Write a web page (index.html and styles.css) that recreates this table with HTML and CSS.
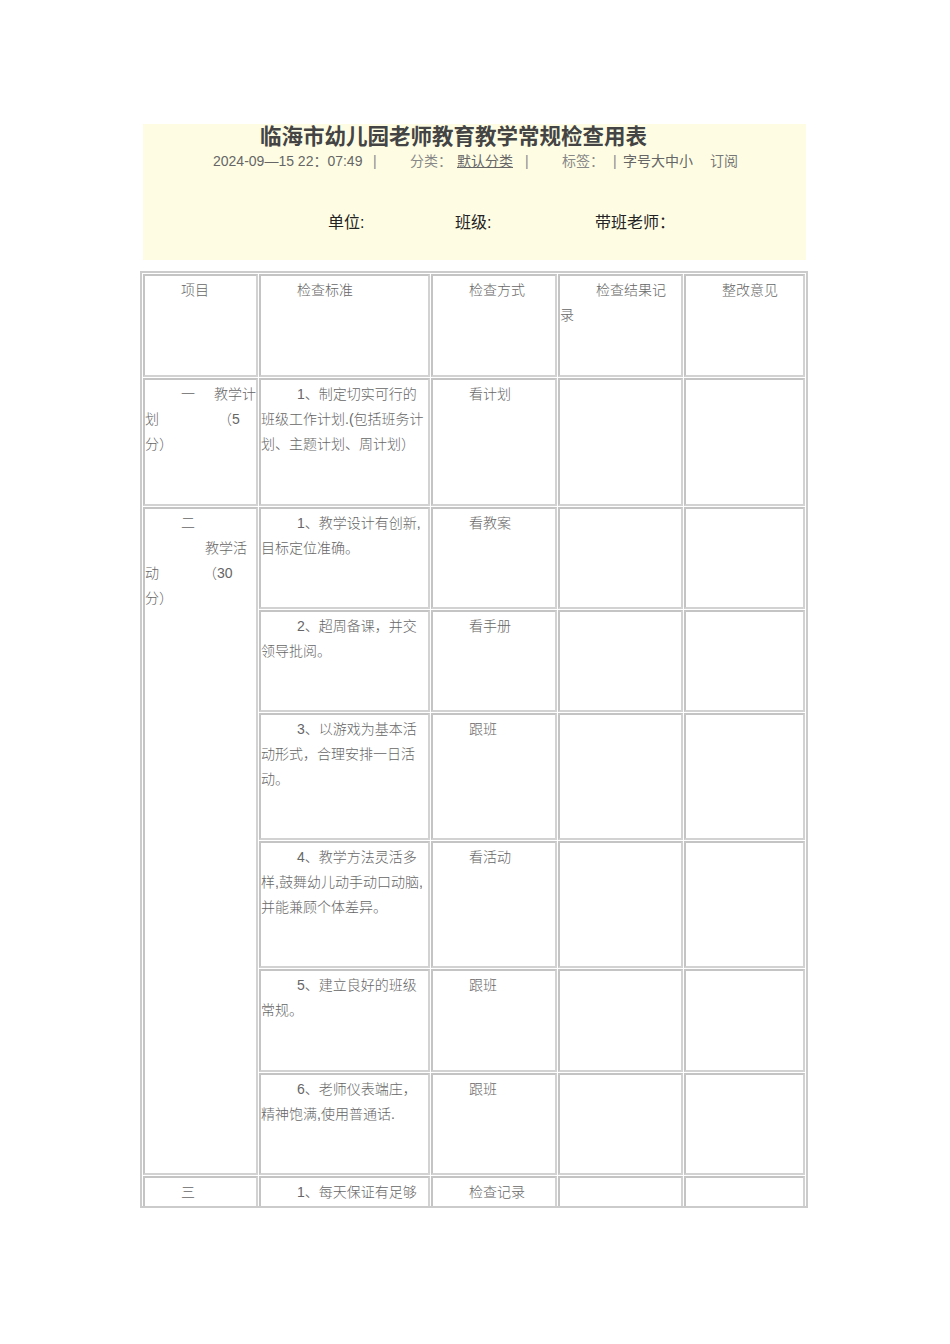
FILE: index.html
```html
<!DOCTYPE html>
<html lang="zh-CN">
<head>
<meta charset="utf-8">
<title>临海市幼儿园老师教育教学常规检查用表</title>
<link rel="stylesheet" href="styles.css">
</head>
<body>
<div class="page">
  <div class="head">
    <h1 class="title">临海市幼儿园老师教育教学常规检查用表</h1>
    <div class="meta">
      <span class="m s1">2024-09—15 22：07:49</span>
      <span class="m s2">|</span>
      <span class="m s3">分类：</span>
      <span class="m s4"><span class="link">默认分类</span></span>
      <span class="m s5">|</span>
      <span class="m s6">标签：</span>
      <span class="m s7">|</span>
      <span class="m s8">字号大中小</span>
      <span class="m s9">订阅</span>
    </div>
    <div class="labels">
      <span class="lb lb1">单位:</span>
      <span class="lb lb2">班级:</span>
      <span class="lb">带班老师：</span>
    </div>
  </div>

  <div class="sheet">
    <table class="grid">
      <colgroup>
        <col class="c1"><col class="c2"><col class="c3"><col class="c4"><col class="c5">
      </colgroup>
      <tr class="r104">
        <td><p>项目</p></td>
        <td><p>检查标准</p></td>
        <td><p>检查方式</p></td>
        <td><p>检查结果记录</p></td>
        <td><p>整改意见</p></td>
      </tr>
      <tr class="r129">
        <td class="item">
          <span class="ln"><span class="ind">一</span><span class="g19">教学计</span></span>
          <span class="ln">划<span class="g59">（5</span></span>
          <span class="ln">分）</span>
        </td>
        <td><p>1、制定切实可行的班级工作计划.(包括班务计划、主题计划、周计划）</p></td>
        <td><p>看计划</p></td>
        <td></td>
        <td></td>
      </tr>
      <tr class="r103">
        <td class="item" rowspan="6">
          <span class="ln"><span class="ind">二</span></span>
          <span class="ln"><span class="g60">教学活</span></span>
          <span class="ln">动<span class="g44">（30</span></span>
          <span class="ln">分）</span>
        </td>
        <td><p>1、教学设计有创新,目标定位准确。</p></td>
        <td><p>看教案</p></td>
        <td></td>
        <td></td>
      </tr>
      <tr class="r103">
        <td><p>2、超周备课，并交领导批阅。</p></td>
        <td><p>看手册</p></td>
        <td></td>
        <td></td>
      </tr>
      <tr class="r128">
        <td><p>3、以游戏为基本活动形式，合理安排一日活动。</p></td>
        <td><p>跟班</p></td>
        <td></td>
        <td></td>
      </tr>
      <tr class="r128">
        <td><p>4、教学方法灵活多样,鼓舞幼儿动手动口动脑,并能兼顾个体差异。</p></td>
        <td><p>看活动</p></td>
        <td></td>
        <td></td>
      </tr>
      <tr class="r104">
        <td><p>5、建立良好的班级常规。</p></td>
        <td><p>跟班</p></td>
        <td></td>
        <td></td>
      </tr>
      <tr class="r103">
        <td><p>6、老师仪表端庄，精神饱满,使用普通话.</p></td>
        <td><p>跟班</p></td>
        <td></td>
        <td></td>
      </tr>
      <tr class="r103">
        <td><p>三</p></td>
        <td><p>1、每天保证有足够</p></td>
        <td><p>检查记录</p></td>
        <td></td>
        <td></td>
      </tr>
    </table>
  </div>
</div>
</body>
</html>
```

FILE: styles.css
```css
* { box-sizing: border-box; }

html, body {
  margin: 0;
  padding: 0;
  background: #ffffff;
}

body {
  font-family: "Liberation Sans", "Noto Sans CJK SC", sans-serif;
  color: #555;
}

.page {
  width: 950px;
  padding-top: 124px;
}

/* ---------- header box ---------- */
.head {
  margin-left: 143px;
  width: 663px;
  height: 136px;
  background: #fefde4;
}

.title {
  margin: 0 0 0 117px;
  font-family: "Liberation Sans", "Noto Sans CJK SC", sans-serif;
  font-size: 21.5px;
  line-height: 26px;
  font-weight: 700;
  color: #444;
  white-space: nowrap;
}

.meta {
  display: flex;
  margin: 1px 0 0 70px;
  font-size: 14px;
  line-height: 20px;
  color: #666;
  white-space: nowrap;
}

.m { display: block; flex: none; }
.s1 { width: 160px; }
.s2 { width: 37px; color: #888; }
.s3 { width: 47px; color: #888; }
.s4 { width: 68px; }
.s5 { width: 37px; color: #888; }
.s6 { width: 51px; color: #888; }
.s7 { width: 10px; color: #888; }
.s8 { width: 87px; }
.s9 { color: #777; }

.link {
  color: #666;
  text-decoration: underline;
}

.labels {
  display: flex;
  margin: 41px 0 0 185px;
  font-size: 16px;
  line-height: 22px;
  color: #222;
  white-space: nowrap;
}

.lb { display: block; flex: none; }
.lb1 { width: 127px; }
.lb2 { width: 140px; }

/* ---------- table ---------- */
.sheet {
  margin: 11px 0 0 140px;
  width: 668px;
  height: 937px;
  border: 2px solid #cbcbcb;
  overflow: hidden;
}

.grid {
  width: 664px;
  table-layout: fixed;
  border-collapse: separate;
  border-spacing: 1px;
  font-family: "Liberation Sans", "Noto Sans CJK SC", sans-serif;
  font-size: 14px;
  line-height: 25px;
  font-weight: 300;
  color: #666;
}

.c1 { width: 115px; }
.c2 { width: 171px; }
.c3 { width: 126px; }
.c4 { width: 125px; }
.c5 { width: 121px; }

.grid td {
  border: 2px solid #c4c4c4;
  border-right-color: #d2d2d2;
  border-bottom-color: #d2d2d2;
  padding: 2px 3px 0 0;
  vertical-align: top;
  background: #fff;
}

.r104 td { height: 103px; }
.r129 td { height: 128px; }
.r103 td { height: 102px; }
.r128 td { height: 127px; }

.grid p {
  margin: 0;
  text-indent: 36px;
}

.item .ln {
  display: block;
  white-space: nowrap;
}

.ind { margin-left: 36px; }
.g19 { margin-left: 19px; }
.g59 { margin-left: 59px; }
.g60 { margin-left: 60px; }
.g44 { margin-left: 44px; }
```
